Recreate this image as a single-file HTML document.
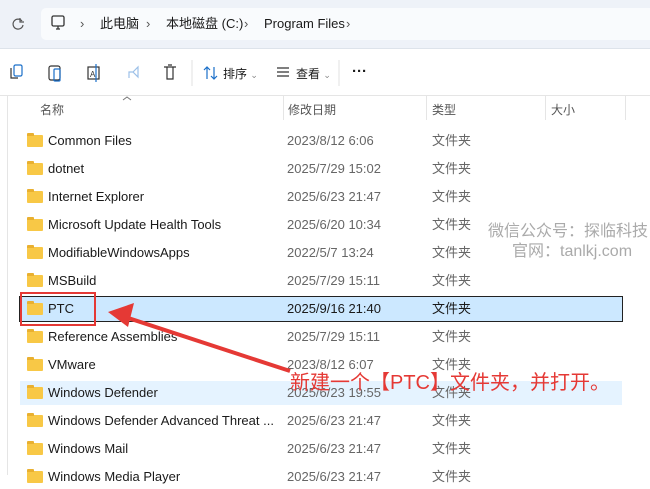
<!DOCTYPE html>
<html><head><meta charset="utf-8"><style>
body{margin:0;width:650px;height:475px;overflow:hidden;background:#fff;font-family:"Liberation Sans","Noto Sans CJK SC",sans-serif;position:relative}
*{line-height:1}
.top{position:absolute;left:0;top:0;width:650px;height:48px;background:#eef2f8;border-bottom:1px solid #dde3ea}
.addr{position:absolute;left:41px;top:8px;width:620px;height:32px;background:#f9fbfd;border-radius:5px}
.t{position:absolute;font-size:13px;color:#1a1a1a;white-space:nowrap;height:16px;line-height:16px}
.g{color:#555}
.hd{position:absolute;top:103px;font-size:12px;color:#555;line-height:14px}
.vl{position:absolute;top:96px;height:24px;width:1px;background:#e5e5e5}
.row{position:absolute;left:20px;width:602px;height:24px;font-size:13px}
.row span{position:absolute;top:0;height:24px;line-height:24px;white-space:nowrap}
.f{position:absolute;left:7px;top:6px;width:16px;height:12px;background:#f8c846;border-radius:1px}
.f:before{content:"";position:absolute;left:0;top:-2px;width:7px;height:3px;background:#e9b030;border-radius:1px 1px 0 0}
.n{left:28px;color:#1a1a1a}.d{left:267px;color:#666}.k{left:412px;color:#666}
</style></head><body>
<div class="top"><div class="addr"></div></div>
<svg style="position:absolute;left:11px;top:17px" width="14" height="14" viewBox="0 0 14 14"><path d="M11 4A5 5 0 1 0 12 8" fill="none" stroke="#555" stroke-width="1.2"/><path d="M9 1v4h4" fill="none" stroke="#555" stroke-width="1.2"/></svg>
<svg style="position:absolute;left:51px;top:15px" width="14" height="16" viewBox="0 0 14 16"><rect x="1" y="1" width="12" height="10" rx="1.5" fill="none" stroke="#333" stroke-width="1.3"/><path d="M5 14h4M7 11v3" stroke="#333" stroke-width="1.3"/></svg>
<div class="t g" style="left:80px;top:16px">›</div>
<div class="t" style="left:100px;top:16px">此电脑</div>
<div class="t g" style="left:146px;top:16px">›</div>
<div class="t" style="left:166px;top:16px">本地磁盘 (C:)</div>
<div class="t g" style="left:244px;top:16px">›</div>
<div class="t" style="left:264px;top:16px">Program Files</div>
<div class="t g" style="left:346px;top:16px">›</div>
<svg style="position:absolute;left:0;top:60px" width="450" height="26" viewBox="0 0 450 26" fill="none" stroke="#1a6fc9" stroke-width="1.2">
<rect x="14" y="5" width="8" height="11" rx="1.5"/><path d="M11 8v10h7" stroke="#333"/>
<rect x="49" y="6" width="11" height="14" rx="2" stroke="#333"/><rect x="54" y="9" width="6" height="12" rx="1"/>
<rect x="88" y="7" width="11" height="12" stroke="#333"/><text x="90" y="17" font-size="8" fill="#333" stroke="none">A</text><path d="M96 4v18"/>
<path d="M133 12l5-5v10z M133 12h-4v6" stroke="#9cc0e8"/>
<path d="M164 7h12M167 7v12h6V7M168 5h4" stroke="#333"/>
<path d="M192 0v26" stroke="#e5e5e5"/>
<path d="M207 7v12M204 10l3-3 3 3M214 7v12M211 16l3 3 3-3"/>
<path d="M277 8h12M277 12h12M277 16h12" stroke="#333"/>
<path d="M339 0v26" stroke="#e5e5e5"/>
</svg>
<div class="t" style="left:223px;top:66px;font-size:12px">排序 <span style="font-size:9px;color:#888">⌄</span></div>
<div class="t" style="left:296px;top:66px;font-size:12px">查看 <span style="font-size:9px;color:#888">⌄</span></div>
<div class="t" style="left:352px;top:64px;font-size:15px;font-weight:bold">···</div>
<div style="position:absolute;left:0;top:95px;width:650px;height:1px;background:#e5e5e5"></div>
<div style="position:absolute;left:7px;top:96px;width:1px;height:379px;background:#e5e5e5"></div>
<svg style="position:absolute;left:122px;top:95px" width="10" height="6"><path d="M1 5l4-3 4 3" fill="none" stroke="#777"/></svg>
<div class="hd" style="left:40px">名称</div>
<div class="vl" style="left:283px"></div><div class="hd" style="left:288px">修改日期</div>
<div class="vl" style="left:426px"></div><div class="hd" style="left:432px">类型</div>
<div class="vl" style="left:545px"></div><div class="hd" style="left:551px">大小</div>
<div class="vl" style="left:625px"></div>

<div class="row" style="top:129px"><i class="f"></i><span class="n">Common Files</span><span class="d">2023/8/12 6:06</span><span class="k">文件夹</span></div>
<div class="row" style="top:157px"><i class="f"></i><span class="n">dotnet</span><span class="d">2025/7/29 15:02</span><span class="k">文件夹</span></div>
<div class="row" style="top:185px"><i class="f"></i><span class="n">Internet Explorer</span><span class="d">2025/6/23 21:47</span><span class="k">文件夹</span></div>
<div class="row" style="top:213px"><i class="f"></i><span class="n">Microsoft Update Health Tools</span><span class="d">2025/6/20 10:34</span><span class="k">文件夹</span></div>
<div class="row" style="top:241px"><i class="f"></i><span class="n">ModifiableWindowsApps</span><span class="d">2022/5/7 13:24</span><span class="k">文件夹</span></div>
<div class="row" style="top:269px"><i class="f"></i><span class="n">MSBuild</span><span class="d">2025/7/29 15:11</span><span class="k">文件夹</span></div>
<div class="row" style="top:297px;background:#cce8ff;outline:1px solid #222"><i class="f"></i><span class="n">PTC</span><span class="d" style="color:#1a1a1a">2025/9/16 21:40</span><span class="k" style="color:#1a1a1a">文件夹</span></div>
<div class="row" style="top:325px"><i class="f"></i><span class="n">Reference Assemblies</span><span class="d">2025/7/29 15:11</span><span class="k">文件夹</span></div>
<div class="row" style="top:353px"><i class="f"></i><span class="n">VMware</span><span class="d">2023/8/12 6:07</span><span class="k">文件夹</span></div>
<div class="row" style="top:381px;background:#e5f3ff"><i class="f"></i><span class="n">Windows Defender</span><span class="d">2025/6/23 19:55</span><span class="k">文件夹</span></div>
<div class="row" style="top:409px"><i class="f"></i><span class="n">Windows Defender Advanced Threat ...</span><span class="d">2025/6/23 21:47</span><span class="k">文件夹</span></div>
<div class="row" style="top:437px"><i class="f"></i><span class="n">Windows Mail</span><span class="d">2025/6/23 21:47</span><span class="k">文件夹</span></div>
<div class="row" style="top:465px"><i class="f"></i><span class="n">Windows Media Player</span><span class="d">2025/6/23 21:47</span><span class="k">文件夹</span></div>

<div class="t" style="left:488px;top:223px;font-size:16px;color:#aaa;height:18px;line-height:18px">微信公众号：探临科技</div>
<div class="t" style="left:512px;top:243px;font-size:16px;color:#aaa;height:18px;line-height:18px">官网：tanlkj.com</div>

<div style="position:absolute;left:20px;top:292px;width:76px;height:34px;border:2px solid #e53935;box-sizing:border-box"></div>
<svg style="position:absolute;left:0;top:0" width="650" height="475"><path d="M290 371L125 317" stroke="#e53935" stroke-width="4"/><path d="M108 312l26-9-6 24z" fill="#e53935"/></svg>
<div class="t" style="left:290px;top:372px;font-size:20px;height:22px;line-height:22px;color:#e53935">新建一个【PTC】文件夹，并打开。</div>
</body></html>
